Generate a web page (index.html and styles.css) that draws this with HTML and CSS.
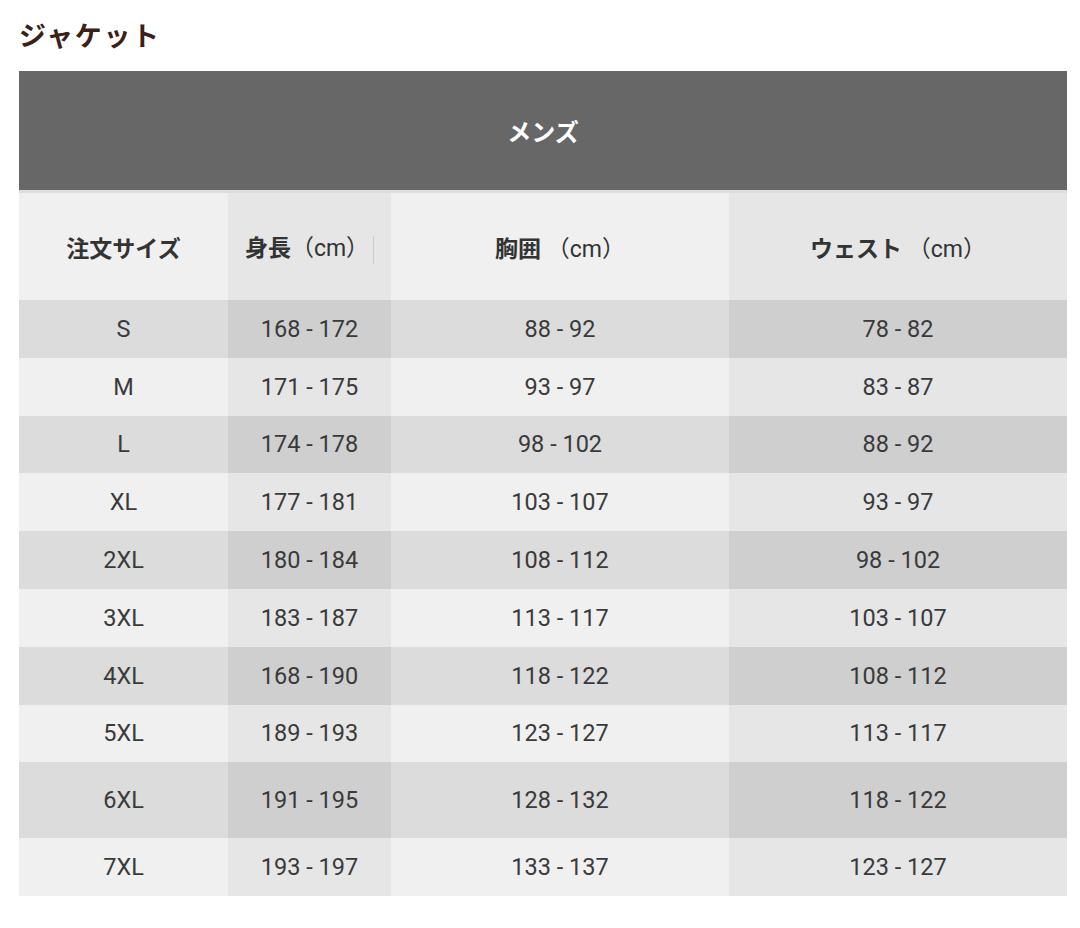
FILE: index.html
```html
<!DOCTYPE html>
<html lang="ja">
<head>
<meta charset="utf-8">
<title>ジャケット サイズ表</title>
<link rel="stylesheet" href="styles.css">
</head>
<body>
<div class="page">
  <h2 class="title">ジャケット</h2>
  <table class="size-table">
    <colgroup>
      <col class="c1"><col class="c2"><col class="c3"><col class="c4">
    </colgroup>
    <thead>
      <tr><th class="band" colspan="4">メンズ</th></tr>
      <tr class="head">
        <th>注文サイズ</th>
        <th>身長<span class="unit">（cm）</span><span class="sep"></span></th>
        <th>胸囲 <span class="unit">（cm）</span></th>
        <th>ウェスト <span class="unit">（cm）</span></th>
      </tr>
    </thead>
    <tbody>
      <tr class="odd"><td>S</td><td>168 - 172</td><td>88 - 92</td><td>78 - 82</td></tr>
      <tr class="even"><td>M</td><td>171 - 175</td><td>93 - 97</td><td>83 - 87</td></tr>
      <tr class="odd"><td>L</td><td>174 - 178</td><td>98 - 102</td><td>88 - 92</td></tr>
      <tr class="even"><td>XL</td><td>177 - 181</td><td>103 - 107</td><td>93 - 97</td></tr>
      <tr class="odd"><td>2XL</td><td>180 - 184</td><td>108 - 112</td><td>98 - 102</td></tr>
      <tr class="even"><td>3XL</td><td>183 - 187</td><td>113 - 117</td><td>103 - 107</td></tr>
      <tr class="odd"><td>4XL</td><td>168 - 190</td><td>118 - 122</td><td>108 - 112</td></tr>
      <tr class="even"><td>5XL</td><td>189 - 193</td><td>123 - 127</td><td>113 - 117</td></tr>
      <tr class="odd tall"><td>6XL</td><td>191 - 195</td><td>128 - 132</td><td>118 - 122</td></tr>
      <tr class="even"><td>7XL</td><td>193 - 197</td><td>133 - 137</td><td>123 - 127</td></tr>
    </tbody>
  </table>
</div>
</body>
</html>
```

FILE: styles.css
```css
html, body {
  margin: 0;
  padding: 0;
  background: #ffffff;
}

body {
  font-family: Roboto, "Noto Sans CJK JP", sans-serif;
  color: #333333;
}

.page {
  padding: 0 13px 0 19px;
}

.title {
  margin: 15px 0 16px;
  font-family: "Noto Sans CJK JP", sans-serif;
  font-size: 27px;
  line-height: 40px;
  font-weight: 700;
  color: #3b1f18;
  letter-spacing: 1.6px;
}

.size-table {
  width: 1048px;
  border-collapse: collapse;
  table-layout: fixed;
}

.c1 { width: 209px; }
.c2 { width: 163px; }
.c3 { width: 338px; }
.c4 { width: 338px; }

.band {
  height: 119px;
  padding: 0;
  background: #676767;
  color: #ffffff;
  font-family: "Noto Sans CJK JP", sans-serif;
  font-size: 24px;
  font-weight: 700;
  text-align: center;
  border-bottom: 3px solid #dddddd;
}

.head th {
  height: 107px;
  padding: 0;
  font-family: Roboto, "Noto Sans CJK JP", sans-serif;
  font-size: 23px;
  font-weight: 700;
  color: #333333;
  text-align: center;
  background: #f0f0f0;
}

.head th:nth-child(even) {
  background: #e6e6e6;
}

.unit {
  font-weight: 400;
}

.sep {
  display: inline-block;
  width: 0;
  height: 28px;
  border-left: 1px solid #cccccc;
  margin-left: 4px;
  vertical-align: middle;
}

tbody td {
  height: 57.8px;
  padding: 0;
  text-align: center;
  font-size: 23.5px;
  color: #3a3a3a;
}

tbody tr.tall td {
  height: 76px;
}

tr.odd td { background: #dcdcdc; }
tr.odd td:nth-child(even) { background: #cfcfcf; }
tr.even td { background: #f0f0f0; }
tr.even td:nth-child(even) { background: #e6e6e6; }
```
